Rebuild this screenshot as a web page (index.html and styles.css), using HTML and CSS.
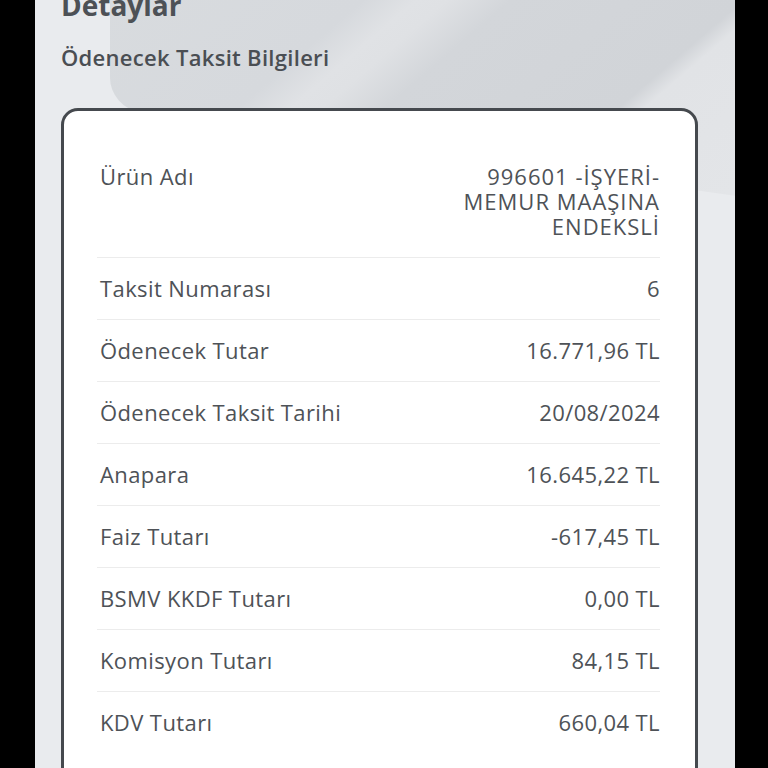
FILE: index.html
```html
<!DOCTYPE html>
<html lang="tr">
<head>
<meta charset="utf-8">
<title>Detaylar</title>
<link rel="stylesheet" href="styles.css">
</head>
<body>
<div class="screen">
  <div class="content">
    <h1 class="title">Detaylar</h1>
    <h2 class="subtitle">Ödenecek Taksit Bilgileri</h2>
    <div class="card">
      <div class="row">
        <span class="label">Ürün Adı</span>
        <span class="value multi">996601 -İŞYERİ- MEMUR MAAŞINA ENDEKSLİ</span>
      </div>
      <div class="row">
        <span class="label">Taksit Numarası</span>
        <span class="value">6</span>
      </div>
      <div class="row">
        <span class="label">Ödenecek Tutar</span>
        <span class="value">16.771,96 TL</span>
      </div>
      <div class="row">
        <span class="label">Ödenecek Taksit Tarihi</span>
        <span class="value">20/08/2024</span>
      </div>
      <div class="row">
        <span class="label">Anapara</span>
        <span class="value">16.645,22 TL</span>
      </div>
      <div class="row">
        <span class="label">Faiz Tutarı</span>
        <span class="value">-617,45 TL</span>
      </div>
      <div class="row">
        <span class="label">BSMV KKDF Tutarı</span>
        <span class="value">0,00 TL</span>
      </div>
      <div class="row">
        <span class="label">Komisyon Tutarı</span>
        <span class="value">84,15 TL</span>
      </div>
      <div class="row last">
        <span class="label">KDV Tutarı</span>
        <span class="value">660,04 TL</span>
      </div>
    </div>
  </div>
</div>
</body>
</html>
```
FILE: styles.css
```css
* { box-sizing: border-box; }
html, body { margin: 0; padding: 0; }
body {
  background: #000;
  height: 768px;
  overflow: hidden;
  font-family: "Open Sans", "Noto Sans", sans-serif;
}
.screen {
  position: relative;
  margin-left: 35px;
  width: 700px;
  height: 768px;
  background: #e9ebee;
  overflow: hidden;
}
.screen::before {
  content: "";
  position: absolute;
  left: 75px;
  top: -100px;
  width: 700px;
  height: 208px;
  transform: skewY(8deg);
  transform-origin: 0 0;
  border-bottom-left-radius: 30px;
  background: linear-gradient(135deg,
    #d9dcdf 0%, #d6d9dd 35%, #e0e2e5 40%, #dfe1e4 43%,
    #d3d6da 49%, #d1d4d8 71%, #e1e3e6 73.5%, #e4e6e9 100%);
}
.content {
  position: relative;
  padding: 0 37px 0 26px;
}
.title {
  margin: -12px 0 0;
  font-size: 28px;
  line-height: 34px;
  font-weight: 700;
  color: #4d5156;
}
.subtitle {
  margin: 21px 0 0;
  font-size: 22px;
  line-height: 28px;
  font-weight: 600;
  letter-spacing: 0.3px;
  color: #4a4e53;
}
.card {
  margin-top: 37px;
  background: #fff;
  border: 3px solid #45494e;
  border-radius: 17px;
  padding: 35px 35px 40px 33px;
}
.row {
  display: flex;
  justify-content: space-between;
  align-items: flex-start;
  gap: 20px;
  padding: 18px 0 18px;
  border-bottom: 1px solid #ececec;
  font-size: 22px;
  line-height: 25px;
  letter-spacing: 0.4px;
  color: #4e5257;
}
.row.last { border-bottom: none; }
.label { padding-left: 3px; white-space: nowrap; }
.value { text-align: right; white-space: nowrap; }
.value.multi { white-space: normal; max-width: 215px; letter-spacing: 1px; }
```
